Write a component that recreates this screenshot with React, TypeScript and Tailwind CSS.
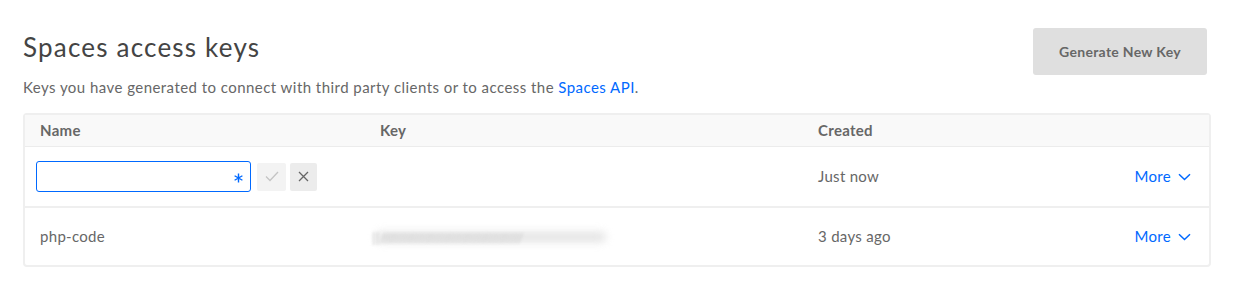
import React from "react";

function Chevron() {
  return (
    <svg width="13" height="8" viewBox="0 0 13 8" fill="none" className="ml-[7px]">
      <path d="M1 1.2 L6.5 6.5 L12 1.2" stroke="#0069ff" strokeWidth="1.5" />
    </svg>
  );
}

function More() {
  return (
    <div className="flex items-center text-[15px] tracking-[0.3px] text-[#0069ff] pr-[18px]">
      <span>More</span>
      <Chevron />
    </div>
  );
}

export default function App() {
  return (
    <div
      className="w-[1235px] h-[290px] bg-white text-[#676767]"
      style={{ fontFamily: "Lato, 'Open Sans', sans-serif" }}
    >
      <div className="pl-[23px] pr-[28px] pt-[28px]">
        <div className="flex justify-between">
          <div>
            <h1 className="text-[26px] leading-[32px] text-[#444] mt-[3px] tracking-[1.2px]">Spaces access keys</h1>
            <p className="text-[15px] leading-[20px] mt-[14px] tracking-[0.45px]">
              Keys you have generated to connect with third party clients or to access the{" "}
              <span className="text-[#0069ff]">Spaces API</span>.
            </p>
          </div>
          <button className="w-[174px] h-[47px] bg-[#dfdfdf] rounded-[3px] text-[14px] font-bold tracking-[0.3px] text-[#676767]">
            Generate New Key
          </button>
        </div>
        <div className="mt-[16px] mr-[-4px] border-2 border-[#efefef] rounded-[4px]">
          <div className="flex items-center h-[32px] bg-[#f9f9f9] border-b border-[#ececec] text-[15px] font-bold tracking-[0.3px]">
            <div className="w-[355px] pl-[15px]">Name</div>
            <div className="w-[438px]">Key</div>
            <div className="flex-1">Created</div>
          </div>
          <div className="flex items-center h-[61px] border-b-2 border-[#efefef] text-[15px] tracking-[0.3px]">
            <div className="w-[355px] pl-[11px] flex items-center">
              <div className="w-[215px] h-[31px] border border-[#0069ff] rounded-[3px] flex items-center justify-end pr-[7px]">
                <svg width="9" height="10" viewBox="0 0 9 10" fill="none" className="mt-[3px]">
                  <path d="M4.5 0.5 V9.5 M0.6 2.75 L8.4 7.25 M0.6 7.25 L8.4 2.75" stroke="#0069ff" strokeWidth="1.4" />
                </svg>
              </div>
              <div className="ml-[6px] w-[29px] h-[28px] bg-[#f3f3f3] rounded-[2px] flex items-center justify-center">
                <svg width="14" height="11" viewBox="0 0 14 11" fill="none">
                  <path d="M1 5.5 L5 9.5 L13 1" stroke="#c4c4c4" strokeWidth="1.3" />
                </svg>
              </div>
              <div className="ml-[4px] w-[27px] h-[28px] bg-[#ececec] rounded-[2px] flex items-center justify-center">
                <svg width="11" height="11" viewBox="0 0 11 11" fill="none">
                  <path d="M1 1 L10 10 M10 1 L1 10" stroke="#666" strokeWidth="1.3" />
                </svg>
              </div>
            </div>
            <div className="w-[438px]" />
            <div className="flex-1">Just now</div>
            <More />
          </div>
          <div className="flex items-center h-[57px] text-[15px] tracking-[0.3px]">
            <div className="w-[355px] pl-[15px]">php-code</div>
            <div className="w-[438px]">
              <div className="w-[236px] h-[12px] relative overflow-visible -ml-[10px]">
                <div className="absolute left-[6px] right-0 top-[1px] bottom-[1px] rounded-full bg-[#dcdcdc] blur-[4px] opacity-80" />
                <div className="absolute left-[2px] top-[-4px] text-[14px] text-[#c8c8c8] blur-[1.5px] tracking-[0.5px] whitespace-nowrap">
                  ||//////////////////////////////////////
                </div>
              </div>
            </div>
            <div className="flex-1">3 days ago</div>
            <More />
          </div>
        </div>
      </div>
    </div>
  );
}
